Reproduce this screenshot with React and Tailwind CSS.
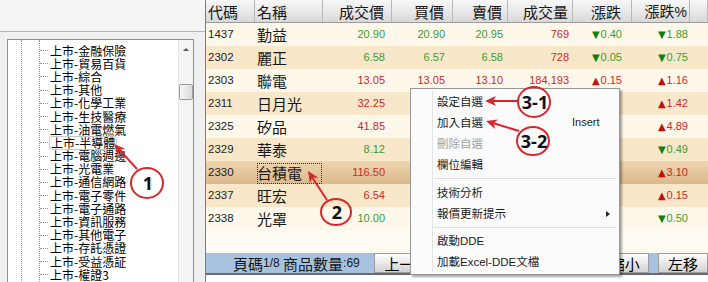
import React from 'react';

const CJK = "font-['Noto_Sans_CJK_TC','Noto_Sans_CJK_SC',sans-serif]";
const NUM = "font-['Liberation_Sans',Arial,sans-serif]";

const treeItems = [
  '上市-金融保險', '上市-貿易百貨', '上市-綜合', '上市-其他', '上市-化學工業', '上市-生技醫療',
  '上市-油電燃氣', '上市-半導體', '上市-電腦週邊', '上市-光電業', '上市-通信網路', '上市-電子零件',
  '上市-電子通路', '上市-資訊服務', '上市-其他電子', '上市-存託憑證', '上市-受益憑証', '上市-權證3',
];

const colCls = [
  'w-[49px] pl-[2px] justify-start',
  'w-[68px] pl-[2px] justify-start',
  'w-[69px] pr-[7px] justify-end',
  'w-[61px] pr-[8px] justify-end',
  'w-[55px] pr-[5px] justify-end',
  'w-[65px] pr-[4px] justify-end',
  'w-[59px] pr-[10px] justify-end',
  'w-[58px] pr-[2px] justify-end',
  'w-[18px]',
];

const headers = ['代碼', '名稱', '成交價', '買價', '賣價', '成交量', '漲跌', '漲跌%', ''];

const LIGHT = 'bg-[#fdf8ea]';
const TAN = 'bg-[#f8e7c8]';
const SEL = 'bg-gradient-to-b from-[#edd4ae] to-[#dcb98c]';

const rows = [
  { code: '1437', name: '勤益', bg: LIGHT, v: [['20.90', 'g'], ['20.90', 'g'], ['20.95', 'g'], ['769', 'r'], ['▼0.40', 'g'], ['▼1.88', 'g']] },
  { code: '2302', name: '麗正', bg: TAN, v: [['6.58', 'g'], ['6.57', 'g'], ['6.58', 'g'], ['728', 'r'], ['▼0.05', 'g'], ['▼0.75', 'g']] },
  { code: '2303', name: '聯電', bg: LIGHT, v: [['13.05', 'r'], ['13.05', 'r'], ['13.10', 'r'], ['184,193', 'r'], ['▲0.15', 'r'], ['▲1.16', 'r']] },
  { code: '2311', name: '日月光', bg: TAN, v: [['32.25', 'r'], ['', ''], ['', ''], ['', ''], ['', ''], ['▲1.42', 'r']] },
  { code: '2325', name: '矽品', bg: LIGHT, v: [['41.85', 'r'], ['', ''], ['', ''], ['', ''], ['', ''], ['▲4.89', 'r']] },
  { code: '2329', name: '華泰', bg: TAN, v: [['8.12', 'g'], ['', ''], ['', ''], ['', ''], ['', ''], ['▼0.49', 'g']] },
  { code: '2330', name: '台積電', bg: SEL, sel: true, v: [['116.50', 'r'], ['', ''], ['', ''], ['', ''], ['', ''], ['▲3.10', 'r']] },
  { code: '2337', name: '旺宏', bg: TAN, v: [['6.54', 'r'], ['', ''], ['', ''], ['', ''], ['', ''], ['▲0.15', 'r']] },
  { code: '2338', name: '光罩', bg: LIGHT, v: [['10.00', 'g'], ['', ''], ['', ''], ['', ''], ['', ''], ['▼0.50', 'g']] },
];

function Val({ text, c }) {
  if (!text) return null;
  const color = c === 'g' ? 'text-[#3b9b33]' : 'text-[#c92a2a]';
  const tri = text[0] === '▼' || text[0] === '▲';
  const triColor = c === 'g' ? 'text-[#11800f]' : 'text-[#c01010]';
  return (
    <span className={`${NUM} text-[11px] leading-none ${color} flex items-center`}>
      {tri && <span className={`font-['DejaVu_Sans',sans-serif] text-[10px] mr-[1px] ${triColor}`}>{text[0]}</span>}
      {tri ? text.slice(1) : text}
    </span>
  );
}

function Arrow({ x1, y1, x2, y2 }) {
  const dx = x2 - x1, dy = y2 - y1;
  const L = Math.hypot(dx, dy);
  const ux = dx / L, uy = dy / L;
  const hl = 11, hw = 5;
  const bx = x2 - ux * hl, by = y2 - uy * hl;
  const nx = bx + ux * 3, ny = by + uy * 3;
  const pts = `${x2},${y2} ${bx - uy * hw},${by + ux * hw} ${nx},${ny} ${bx + uy * hw},${by - ux * hw}`;
  return (
    <g>
      <line x1={x1} y1={y1} x2={nx} y2={ny} stroke="#d9262c" strokeWidth="2" />
      <polygon points={pts} fill="#d9262c" />
    </g>
  );
}

function Badge({ cx, cy, rx, ry, label }) {
  return (
    <g>
      <ellipse cx={cx} cy={cy} rx={rx} ry={ry} fill="none" stroke="#d9262c" strokeWidth="2" />
      <text x={cx + 1} y={cy + 6.5} textAnchor="middle" fontFamily="'Open Sans', 'Liberation Sans', sans-serif" fontWeight="700" fontSize="18" fill="#111">{label}</text>
    </g>
  );
}

function MenuItem({ children, disabled, right, arrow }) {
  return (
    <div className="flex h-[21px] items-center">
      <span className={`w-[161px] pl-[26px] text-[11.5px] leading-none ${disabled ? 'text-[#a3a3a3]' : 'text-[#1b1b1b]'}`}>{children}</span>
      {right && <span className={`${NUM} text-[11px] leading-none text-[#1b1b1b]`}>{right}</span>}
      {arrow && <span className="ml-auto mr-[9px] w-0 h-0 border-y-[3.5px] border-y-transparent border-l-[4px] border-l-[#222]" />}
    </div>
  );
}

function Sep() {
  return (
    <div className="h-[7px] flex flex-col justify-center pl-[21px] pr-[2px]">
      <div className="h-px bg-[#e0e0e0]" />
      <div className="h-px bg-white" />
    </div>
  );
}

const BTN = 'flex items-center justify-center border border-[#9c9c9c] bg-gradient-to-b from-white to-[#d2d2d2] text-[15px] leading-none';

export default function App() {
  return (
    <div className={`relative w-[708px] h-[282px] overflow-hidden flex bg-[#f0f0f0] ${CJK}`}>
      {/* Left tree panel */}
      <div className="w-[205px] h-full flex flex-col">
        <div className="h-[32px] shrink-0 bg-[#f5f5f5] border-b border-[#b5b5b5]" />
        <div className="ml-[7px] mt-[7px] w-[187px] flex-1 border border-[#8e8f8f] border-b-0 bg-white flex">
          <div className="relative flex-1 pt-[4px]">
            <div className="absolute left-[13px] top-0 bottom-0 border-l border-dotted border-[#9a9a9a]" />
            <div className="absolute left-[31px] top-0 bottom-0 border-l border-dotted border-[#9a9a9a]" />
            {treeItems.map((t, i) => (
              <div key={i} className="relative h-[13.2px] flex items-center pl-[32px]">
                <span className="w-[8px] border-t border-dotted border-[#9a9a9a]" />
                <span className={`ml-[2px] text-[12px] leading-none text-black whitespace-nowrap ${i === 7 ? 'outline outline-1 outline-[#c8c8c8] rounded-[2px] px-[1px] -mx-[1px]' : ''}`}>{t}</span>
              </div>
            ))}
          </div>
          <div className="w-[15px] bg-[#f4f4f4] border-l border-[#e6e6e6] flex flex-col items-center">
            <span className="mt-[8px] w-0 h-0 border-x-[3px] border-x-transparent border-b-[3px] border-b-[#555]" />
            <div className="mt-[33px] w-[14px] h-[16px] rounded-[2px] border border-[#9b9b9b] bg-gradient-to-r from-[#f6f6f6] to-[#dcdcdc]" />
          </div>
        </div>
      </div>

      {/* Right table */}
      <div className="w-[503px] h-full flex flex-col border-l border-[#7c7c7c]">
        <div className="h-[23px] shrink-0 flex border-b border-[#9a9a9a] bg-gradient-to-b from-[#f8f8f8] to-[#d9d9d9]">
          {headers.map((h, i) => (
            <div key={i} className={`${colCls[i]} h-full flex items-center border-r border-[#b8b8b8] text-[15px] leading-none text-[#161616]`}>
              {h === '漲跌%' ? (<span>漲跌<span className={`${NUM} text-[14px]`}>%</span></span>) : h}
            </div>
          ))}
        </div>
        <div className="h-[230px] shrink-0 flex flex-col bg-[#fefbf2]">
          {rows.map((r, ri) => (
            <div key={ri} className={`h-[23px] shrink-0 flex ${r.bg}`}>
              <div className={`${colCls[0]} flex items-center ${NUM} text-[11.5px] text-[#1e1e1e]`}>{r.code}</div>
              <div className={`${colCls[1]} relative flex items-center text-[15px] leading-none text-[#161616]`}>
                {r.sel && <div className="absolute left-[2px] top-[2px] right-[1px] bottom-0 border border-dotted border-[#333]" />}
                <span className="relative">{r.name}</span>
              </div>
              {r.v.map((v, vi) => (
                <div key={vi} className={`${colCls[vi + 2]} flex items-center`}>
                  <Val text={v[0]} c={v[1]} />
                </div>
              ))}
              <div className={colCls[8]} />
            </div>
          ))}
        </div>
        <div className="h-[22px] shrink-0 flex bg-[#a7c2df] border-b-2 border-[#6a6a6a]">
          <div className="w-[169px] flex items-center pl-[27px] text-[15px] leading-none text-[#161616] whitespace-nowrap">
            頁碼<span className={`${NUM} text-[12px]`}>1/8</span>&nbsp;商品數量<span className={`${NUM} text-[12px]`}>:69</span>
          </div>
          <div className={`ml-[3px] w-[69px] ${BTN}`}>上一頁</div>
          <div className={`ml-[9px] w-[69px] ${BTN}`} />
          <div className={`ml-[9px] w-[68px] ${BTN}`} />
          <div className={`ml-[9px] w-[50px] ${BTN}`}>縮小</div>
          <div className={`ml-[9px] w-[50px] shrink-0 ${BTN}`}>左移</div>
        </div>
        <div className="flex-1 bg-white" />
      </div>

      {/* Context menu */}
      <div className="absolute left-[410px] top-[88px] w-[210px] h-[187px] border border-[#979797] bg-[#fbfbfb] shadow-[2px_2px_2px_rgba(0,0,0,0.35)] pt-[2px]">
        <div className="absolute left-[21px] top-[1px] bottom-[1px] w-px bg-[#e2e3e3]" />
        <div className="absolute left-[22px] top-[1px] bottom-[1px] w-px bg-white" />
        <MenuItem>設定自選</MenuItem>
        <MenuItem right="Insert">加入自選</MenuItem>
        <MenuItem disabled>刪除自選</MenuItem>
        <MenuItem>欄位編輯</MenuItem>
        <Sep />
        <MenuItem>技術分析</MenuItem>
        <MenuItem arrow>報價更新提示</MenuItem>
        <Sep />
        <MenuItem>啟動<span className={NUM}>DDE</span></MenuItem>
        <MenuItem>加載<span className={NUM}>Excel-DDE</span>文檔</MenuItem>
      </div>

      {/* Annotations */}
      <svg className="absolute inset-0 pointer-events-none" width="708" height="282" viewBox="0 0 708 282">
        <Arrow x1={137} y1={169} x2={114} y2={144} />
        <Badge cx={147} cy={183} rx={16} ry={15} label="1" />
        <Arrow x1={327} y1={200} x2={308} y2={171} />
        <Badge cx={336} cy={212} rx={15} ry={13} label="2" />
        <Arrow x1={518} y1={101} x2={485} y2={101} />
        <Badge cx={534} cy={102} rx={16} ry={15} label="3-1" />
        <Arrow x1={519} y1={131} x2={486} y2={121} />
        <Badge cx={533} cy={141} rx={16} ry={14} label="3-2" />
      </svg>
    </div>
  );
}
